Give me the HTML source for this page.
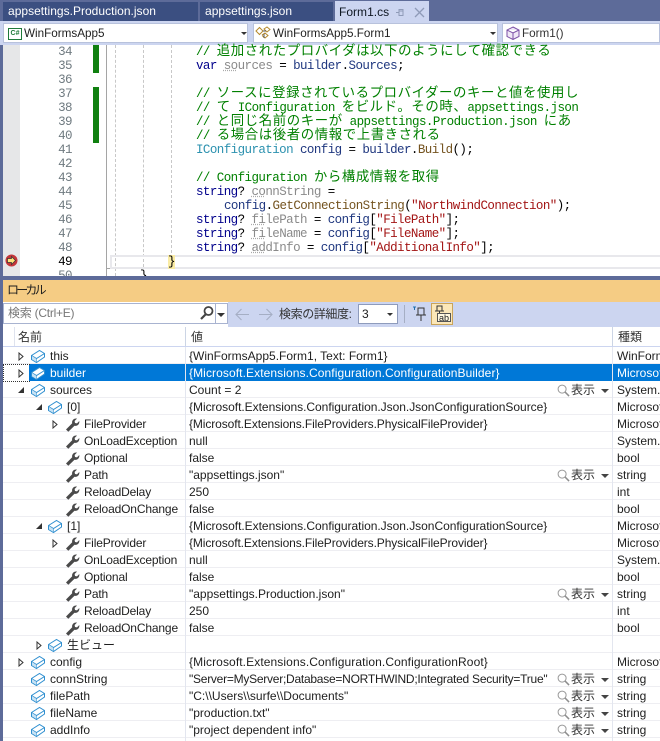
<!DOCTYPE html>
<html lang="ja"><head><meta charset="utf-8"><style>
html,body{margin:0;padding:0}
#p{position:relative;width:660px;height:741px;overflow:hidden;background:#5d6b99;font:12px "Liberation Sans","Noto Sans CJK JP",sans-serif;color:#1e1e1e}
#p div,#p svg{position:absolute}
.t{white-space:nowrap}
.c{left:0;white-space:pre;font:12.5px/14px "Liberation Mono","Noto Sans CJK JP",monospace;letter-spacing:-.57px;color:#000}
.c i{font:normal 13.4px/0 "Noto Sans CJK JP",sans-serif;letter-spacing:.6px}
.c u{text-decoration:underline dotted #aaa}
.g{color:#008000}.b{color:#00008b}.v{color:#8a8a8a}.k{color:#2b91af}.m{color:#74531f}.s{color:#a31515}.d{color:#1f377f}
.n{left:20px;width:52px;text-align:right;font:12.5px/14px "Liberation Mono",monospace;color:#6f7a80;letter-spacing:-.57px}
.r{left:3px;width:657px;height:17px;border-bottom:1px solid #eeeef2;box-sizing:border-box}
.r>*{margin-top:1px}
.r>.h,.r>.f{margin-top:0}
.l{white-space:nowrap;line-height:16px;height:16px;top:0}
.l[style*="left:81px"]{letter-spacing:-.15px}
.h{background:#0078d7;color:#fff}
.tab{font-size:12px;line-height:17px;letter-spacing:.02px}
.nav{font-size:11.7px;line-height:17px}
</style></head><body><div id="p">
<svg width="0" height="0" style="left:0;top:0"><defs>
<symbol id="o" viewBox="0 0 16 16"><path d="M1.500 7.500 9.500 2.500 14.500 5.500V9L6.500 14.500 1.500 11.500Z" fill="#fff" stroke="#2f8fd0" stroke-width="1"/><path d="M1.500 7.500 6.500 10.500 14.500 5.500M6.500 10.500V14.500" fill="none" stroke="#2f8fd0" stroke-width="1"/><path d="M2 8 6.500 11V14L2 11Z" fill="#c6e2f5"/></symbol>
<symbol id="w" viewBox="0 0 16 16"><path d="M2 13.500 8.200 7.300C7.500 4.600 9.800 2 13 2.600L10.600 5 11 7 13 7.400 15.300 5C15.800 8.200 13.200 10.500 10.500 9.700L4.300 15.700Z" fill="#4a4a4a"/></symbol>
<symbol id="q" viewBox="0 0 14 14"><circle cx="5.500" cy="5.500" r="4.300" fill="none" stroke="#999" stroke-width="1.100"/><path d="M8.700 8.700 13 13" stroke="#8d8d8d" stroke-width="1.600"/></symbol>
</defs></svg>

<!-- tabs -->
<div style="left:0;top:0;width:660px;height:21px;background:#5d6b99"></div>
<div style="left:3px;top:2px;width:195px;height:19px;background:#3b4f81"></div>
<div style="left:200px;top:2px;width:133px;height:19px;background:#3b4f81"></div>
<div class="t tab" style="left:8px;top:3px;color:#fff">appsettings.Production.json</div>
<div class="t tab" style="left:205px;top:3px;color:#fff">appsettings.json</div>
<div style="left:335px;top:1px;width:94px;height:20px;background:#ccd5f0"></div>
<div class="t tab" style="left:339px;top:4px;color:#0e1621">Form1.cs</div>
<svg style="left:395px;top:7px" width="11" height="11" viewBox="0 0 11 11"><path d="M1 5.500H4M4 2.500V8.500H8V2.500ZM4 4H8" fill="none" stroke="#8f9bb8"/></svg>
<svg style="left:414px;top:7px" width="11" height="11" viewBox="0 0 11 11"><path d="M1 1 10 10M10 1 1 10" stroke="#8f9bb8" stroke-width="1.300"/></svg>
<!-- nav bar -->
<div style="left:0;top:21px;width:660px;height:24px;background:#ccd5f0"></div>
<div style="left:3px;top:23px;width:245px;height:20px;background:#fff;border:1px solid #b8c2dc;box-sizing:border-box"></div>
<div style="left:253px;top:23px;width:245px;height:20px;background:#fff;border:1px solid #b8c2dc;box-sizing:border-box"></div>
<div style="left:502px;top:23px;width:158px;height:20px;background:#fff;border:1px solid #b8c2dc;box-sizing:border-box"></div>
<div class="t" style="left:8px;top:28px;width:12px;height:10px;border:1px solid #1f7a3a;font:bold 7px/10px 'Liberation Sans';color:#1f7a3a;text-align:center">C#</div>
<div class="t nav" style="left:24px;top:25px">WinFormsApp5</div>
<div style="left:241px;top:32px;border:3px solid transparent;border-top:3px solid #333"></div>
<svg style="left:255px;top:26px" width="16" height="15" viewBox="0 0 16 15"><path d="M1 5 4.500 1.500 8 5 4.500 8.500ZM9 3 12 1 15 3.500 12 6ZM7 9 10 7 13 9.500 10 12 7 9.500" fill="#fff" stroke="#b5892c"/><path d="M8 5H11M9 8V12" stroke="#555" fill="none"/></svg>
<div class="t nav" style="left:273px;top:25px">WinFormsApp5.Form1</div>
<div style="left:490px;top:32px;border:3px solid transparent;border-top:3px solid #333"></div>
<svg style="left:506px;top:26px" width="14" height="14" viewBox="0 0 14 14"><path d="M7 1 13 4V10.500L7 13.500 1 10.500V4ZM1 4 7 7 13 4M7 7V13.500" fill="#f0e8f6" stroke="#7b4fa6"/></svg>
<div class="t nav" style="left:522px;top:25px;color:#333">Form1()</div>

<!-- editor -->
<div style="left:3px;top:45px;width:657px;height:231px;background:#fff;overflow:hidden"></div>
<div style="left:3px;top:45px;width:17px;height:231px;background:#e6e7e8"></div>
<div style="left:93px;top:45px;width:6px;height:28px;background:#108010"></div>
<div style="left:93px;top:87px;width:6px;height:56px;background:#108010"></div>
<div style="left:106px;top:45px;width:1px;height:231px;background:#a5a5a5"></div>
<div style="left:107px;top:268px;width:4px;height:1px;background:#a5a5a5"></div>
<div style="left:115px;top:45px;width:0;height:231px;border-left:1px dashed #c8c8c8"></div>
<div style="left:143px;top:45px;width:0;height:222px;border-left:1px dashed #c8c8c8"></div>
<div style="left:171px;top:45px;width:0;height:208px;border-left:1px dashed #c8c8c8"></div>
<div style="left:110px;top:255px;width:550px;height:10px;border:2px solid #e8e8ec;border-right:0"></div>
<div style="left:168px;top:255px;width:7px;height:14px;background:#faeca5"></div>
<svg style="left:5px;top:254px" width="13" height="13" viewBox="0 0 13 13"><circle cx="6.500" cy="6.500" r="6" fill="#c4363a"/><path d="M2.500 4.500H6.500V2.500L10.500 6.500 6.500 10.500V8.500H2.500Z" fill="#ffe27a" stroke="#333" stroke-width=".7"/></svg>

<div class="n" style="top:45px">34</div><div class="n" style="top:59px">35</div><div class="n" style="top:73px">36</div><div class="n" style="top:87px">37</div><div class="n" style="top:101px">38</div><div class="n" style="top:115px">39</div><div class="n" style="top:129px">40</div><div class="n" style="top:143px">41</div><div class="n" style="top:157px">42</div><div class="n" style="top:171px">43</div><div class="n" style="top:185px">44</div><div class="n" style="top:199px">45</div><div class="n" style="top:213px">46</div><div class="n" style="top:227px">47</div><div class="n" style="top:241px">48</div><div class="n" style="top:255px;color:#000">49</div><div class="n" style="top:269px;height:7px;overflow:hidden">50</div>

<div class="c g" style="left:196px;top:45px">// <i>追加されたプロバイダは以下のようにして確認できる</i></div>
<div class="c" style="left:196px;top:59px"><span class="b">var</span> <span class="v"><u>so</u>urces</span> = <span class="d">builder</span>.<span class="d">Sources</span>;</div>
<div class="c g" style="left:196px;top:87px">// <i>ソースに登録されているプロバイダーのキーと値を使用し</i></div>
<div class="c g" style="left:196px;top:101px">// <i>て</i> IConfiguration <i>をビルド。その時、</i>appsettings.json</div>
<div class="c g" style="left:196px;top:115px">// <i>と同じ名前のキーが</i> appsettings.Production.json <i>にあ</i></div>
<div class="c g" style="left:196px;top:129px">// <i>る場合は後者の情報で上書きされる</i></div>
<div class="c" style="left:196px;top:143px"><span class="k">IConfiguration</span> <span class="d">config</span> = <span class="d">builder</span>.<span class="m">Build</span>();</div>
<div class="c g" style="left:196px;top:171px">// Configuration <i>から構成情報を取得</i></div>
<div class="c" style="left:196px;top:185px"><span class="b">string</span>? <span class="v"><u>co</u>nnString</span> =</div>
<div class="c" style="left:224px;top:199px"><span class="d">config</span>.<span class="m">GetConnectionString</span>(<span class="s">"NorthwindConnection"</span>);</div>
<div class="c" style="left:196px;top:213px"><span class="b">string</span>? <span class="v"><u>fi</u>lePath</span> = <span class="d">config</span>[<span class="s">"FilePath"</span>];</div>
<div class="c" style="left:196px;top:227px"><span class="b">string</span>? <span class="v"><u>fi</u>leName</span> = <span class="d">config</span>[<span class="s">"FileName"</span>];</div>
<div class="c" style="left:196px;top:241px"><span class="b">string</span>? <span class="v"><u>ad</u>dInfo</span> = <span class="d">config</span>[<span class="s">"AdditionalInfo"</span>];</div>
<div class="c" style="left:168px;top:255px">}</div>
<div style="left:140px;top:269px;height:7px;width:10px;overflow:hidden"><div class="c" style="left:0;top:0">}</div></div>

<!-- locals panel -->
<div style="left:3px;top:280px;width:657px;height:22px;background:#f5cc84"></div>
<div class="t" style="left:7px;top:282px;font-size:12px;line-height:17px;color:#1e1e1e;letter-spacing:-2.800px">ローカル</div>
<div style="left:3px;top:302px;width:657px;height:439px;background:#fff"></div>
<div style="left:228px;top:302px;width:432px;height:25px;background:#ccd5f0"></div>
<div style="left:3px;top:303px;width:225px;height:21px;border:1px solid #a8b3d0;box-sizing:border-box;background:#fff"></div>
<div class="t" style="left:8px;top:305px;color:#777;line-height:17px;letter-spacing:-.25px">検索 (Ctrl+E)</div>
<svg style="left:199px;top:305px" width="16" height="16" viewBox="0 0 16 16"><circle cx="9.500" cy="6" r="4" fill="none" stroke="#444" stroke-width="1.800"/><path d="M7 9 2 14" stroke="#444" stroke-width="2.200"/></svg>
<div style="left:215px;top:304px;width:1px;height:19px;background:#a8b3d0"></div>
<div style="left:217px;top:313px;border:4px solid transparent;border-top:4px solid #333"></div>
<svg style="left:234px;top:307px" width="17" height="15" viewBox="0 0 17 15"><path d="M15 7.500H2M7.500 2 2 7.500 7.500 13" fill="none" stroke="#a5aec4" stroke-width="1.100"/></svg>
<svg style="left:257px;top:307px" width="17" height="15" viewBox="0 0 17 15"><path d="M2 7.500H15M9.500 2 15 7.500 9.500 13" fill="none" stroke="#a5aec4" stroke-width="1.100"/></svg>
<div class="t" style="left:279px;top:306px;line-height:17px;color:#333;letter-spacing:-.4px">検索の詳細度:</div>
<div style="left:358px;top:304px;width:40px;height:20px;background:#fff;border:1px solid #8e9bbc;box-sizing:border-box"></div>
<div class="t" style="left:362px;top:306px;line-height:17px">3</div>
<div style="left:387px;top:313px;border:3px solid transparent;border-top:3px solid #333"></div>
<div style="left:404px;top:305px;width:1px;height:18px;background:#a5aec4"></div>
<svg style="left:411px;top:305px" width="17" height="18" viewBox="0 0 17 18"><path d="M2 2H5M3.500 2V5" stroke="#1f6fb0" fill="none"/><path d="M7 3H13V10H7ZM10 10V16M5 10H15" fill="none" stroke="#333"/></svg>
<div style="left:431px;top:303px;width:22px;height:22px;background:#fbe7b8;border:1px solid #c9a45a;box-sizing:border-box"></div>
<svg style="left:433px;top:304px" width="19" height="20" viewBox="0 0 19 20"><path d="M4 2H9V7H4ZM6.500 7V11M2 7H11" fill="none" stroke="#333"/><rect x="4.500" y="9.500" width="13" height="8" fill="#fff8e0" stroke="#555"/></svg>
<div class="t" style="left:439px;top:313px;font-size:9px;line-height:10px;color:#222">ab</div>

<!-- header -->
<div style="left:3px;top:327px;width:657px;height:19px;background:#fff;border-bottom:1px solid #ccd5f0"></div>
<div style="left:14px;top:327px;width:1px;height:19px;background:#dfe3ee"></div>
<div style="left:185px;top:327px;width:1px;height:19px;background:#ccd5e5"></div>
<div style="left:612px;top:327px;width:1px;height:19px;background:#ccd5e5"></div>
<div class="t" style="left:18px;top:329px;line-height:17px;color:#333">名前</div>
<div class="t" style="left:191px;top:329px;line-height:17px;color:#333">値</div>
<div class="t" style="left:618px;top:329px;line-height:17px;color:#333">種類</div>

<!-- rows -->
<div style="left:185px;top:347px;width:1px;height:394px;background:#e3e6ef;z-index:2"></div>
<div style="left:612px;top:347px;width:1px;height:394px;background:#e3e6ef;z-index:2"></div>

<div class="r" style="top:347px"><svg style="left:14px;top:4px" width="8" height="9" viewBox="0 0 8 9"><path d="M2 1 6 4.500 2 8Z" fill="#fff" stroke="#333"/></svg><svg style="left:27px;top:0" width="16" height="16"><use href="#o"/></svg><div class="l" style="left:47px">this</div><div class="l" style="left:186px">{WinFormsApp5.Form1, Text: Form1}</div><div class="l" style="left:614px">WinForms</div></div>

<div class="r" style="top:364px;border:0"><div style="left:26px;top:0;width:631px;height:17px" class="h"></div><div class="f" style="left:0;top:0;width:26px;height:16px;border:1px dotted #333;border-right:0"></div><svg style="left:14px;top:4px" width="8" height="9" viewBox="0 0 8 9"><path d="M2 1 6 4.500 2 8Z" fill="#fff" stroke="#333"/></svg><svg style="left:27px;top:0" width="16" height="16"><use href="#o"/></svg><div class="l" style="left:47px;color:#fff">builder</div><div class="l" style="left:186px;color:#fff;letter-spacing:.09px">{Microsoft.Extensions.Configuration.ConfigurationBuilder}</div><div class="l" style="left:614px;color:#fff">Microsoft</div></div>

<div class="r" style="top:381px"><svg style="left:14px;top:4px" width="8" height="8" viewBox="0 0 8 8"><path d="M7 1V7H1Z" fill="#333"/></svg><svg style="left:27px;top:0" width="16" height="16"><use href="#o"/></svg><div class="l" style="left:47px">sources</div><div class="l" style="left:186px">Count = 2</div><svg style="left:554px;top:2px" width="13" height="13"><use href="#q"/></svg><div class="l" style="left:568px;color:#333">表示</div><div style="left:598px;top:7px;border:4px solid transparent;border-top:4px solid #444"></div><div class="l" style="left:614px">System.C</div></div>

<div class="r" style="top:398px"><svg style="left:32px;top:4px" width="8" height="8" viewBox="0 0 8 8"><path d="M7 1V7H1Z" fill="#333"/></svg><svg style="left:44px;top:0" width="16" height="16"><use href="#o"/></svg><div class="l" style="left:64px">[0]</div><div class="l" style="left:186px;letter-spacing:-.03px">{Microsoft.Extensions.Configuration.Json.JsonConfigurationSource}</div><div class="l" style="left:614px">Microsoft</div></div>

<div class="r" style="top:415px"><svg style="left:48px;top:4px" width="8" height="9" viewBox="0 0 8 9"><path d="M2 1 6 4.500 2 8Z" fill="#fff" stroke="#333"/></svg><svg style="left:61px;top:0" width="16" height="16"><use href="#w"/></svg><div class="l" style="left:81px">FileProvider</div><div class="l" style="left:186px;letter-spacing:-.1px">{Microsoft.Extensions.FileProviders.PhysicalFileProvider}</div><div class="l" style="left:614px">Microsoft</div></div>

<div class="r" style="top:432px"><svg style="left:61px;top:0" width="16" height="16"><use href="#w"/></svg><div class="l" style="left:81px">OnLoadException</div><div class="l" style="left:186px">null</div><div class="l" style="left:614px">System.A</div></div>

<div class="r" style="top:449px"><svg style="left:61px;top:0" width="16" height="16"><use href="#w"/></svg><div class="l" style="left:81px">Optional</div><div class="l" style="left:186px">false</div><div class="l" style="left:614px">bool</div></div>

<div class="r" style="top:466px"><svg style="left:61px;top:0" width="16" height="16"><use href="#w"/></svg><div class="l" style="left:81px">Path</div><div class="l" style="left:186px">"appsettings.json"</div><svg style="left:554px;top:2px" width="13" height="13"><use href="#q"/></svg><div class="l" style="left:568px;color:#333">表示</div><div style="left:598px;top:7px;border:4px solid transparent;border-top:4px solid #444"></div><div class="l" style="left:614px">string</div></div>

<div class="r" style="top:483px"><svg style="left:61px;top:0" width="16" height="16"><use href="#w"/></svg><div class="l" style="left:81px">ReloadDelay</div><div class="l" style="left:186px">250</div><div class="l" style="left:614px">int</div></div>

<div class="r" style="top:500px"><svg style="left:61px;top:0" width="16" height="16"><use href="#w"/></svg><div class="l" style="left:81px">ReloadOnChange</div><div class="l" style="left:186px">false</div><div class="l" style="left:614px">bool</div></div>

<div class="r" style="top:517px"><svg style="left:32px;top:4px" width="8" height="8" viewBox="0 0 8 8"><path d="M7 1V7H1Z" fill="#333"/></svg><svg style="left:44px;top:0" width="16" height="16"><use href="#o"/></svg><div class="l" style="left:64px">[1]</div><div class="l" style="left:186px;letter-spacing:-.03px">{Microsoft.Extensions.Configuration.Json.JsonConfigurationSource}</div><div class="l" style="left:614px">Microsoft</div></div>

<div class="r" style="top:534px"><svg style="left:48px;top:4px" width="8" height="9" viewBox="0 0 8 9"><path d="M2 1 6 4.500 2 8Z" fill="#fff" stroke="#333"/></svg><svg style="left:61px;top:0" width="16" height="16"><use href="#w"/></svg><div class="l" style="left:81px">FileProvider</div><div class="l" style="left:186px;letter-spacing:-.1px">{Microsoft.Extensions.FileProviders.PhysicalFileProvider}</div><div class="l" style="left:614px">Microsoft</div></div>

<div class="r" style="top:551px"><svg style="left:61px;top:0" width="16" height="16"><use href="#w"/></svg><div class="l" style="left:81px">OnLoadException</div><div class="l" style="left:186px">null</div><div class="l" style="left:614px">System.A</div></div>

<div class="r" style="top:568px"><svg style="left:61px;top:0" width="16" height="16"><use href="#w"/></svg><div class="l" style="left:81px">Optional</div><div class="l" style="left:186px">false</div><div class="l" style="left:614px">bool</div></div>

<div class="r" style="top:585px"><svg style="left:61px;top:0" width="16" height="16"><use href="#w"/></svg><div class="l" style="left:81px">Path</div><div class="l" style="left:186px">"appsettings.Production.json"</div><svg style="left:554px;top:2px" width="13" height="13"><use href="#q"/></svg><div class="l" style="left:568px;color:#333">表示</div><div style="left:598px;top:7px;border:4px solid transparent;border-top:4px solid #444"></div><div class="l" style="left:614px">string</div></div>

<div class="r" style="top:602px"><svg style="left:61px;top:0" width="16" height="16"><use href="#w"/></svg><div class="l" style="left:81px">ReloadDelay</div><div class="l" style="left:186px">250</div><div class="l" style="left:614px">int</div></div>

<div class="r" style="top:619px"><svg style="left:61px;top:0" width="16" height="16"><use href="#w"/></svg><div class="l" style="left:81px">ReloadOnChange</div><div class="l" style="left:186px">false</div><div class="l" style="left:614px">bool</div></div>

<div class="r" style="top:636px"><svg style="left:32px;top:4px" width="8" height="9" viewBox="0 0 8 9"><path d="M2 1 6 4.500 2 8Z" fill="#fff" stroke="#333"/></svg><svg style="left:44px;top:0" width="16" height="16"><use href="#o"/></svg><div class="l" style="left:64px">生ビュー</div></div>

<div class="r" style="top:653px"><svg style="left:14px;top:4px" width="8" height="9" viewBox="0 0 8 9"><path d="M2 1 6 4.500 2 8Z" fill="#fff" stroke="#333"/></svg><svg style="left:27px;top:0" width="16" height="16"><use href="#o"/></svg><div class="l" style="left:47px">config</div><div class="l" style="left:186px;letter-spacing:.1px">{Microsoft.Extensions.Configuration.ConfigurationRoot}</div><div class="l" style="left:614px">Microsoft</div></div>

<div class="r" style="top:670px"><svg style="left:27px;top:0" width="16" height="16"><use href="#o"/></svg><div class="l" style="left:47px">connString</div><div class="l" style="left:186px;letter-spacing:-.25px">"Server=MyServer;Database=NORTHWIND;Integrated Security=True"</div><svg style="left:554px;top:2px" width="13" height="13"><use href="#q"/></svg><div class="l" style="left:568px;color:#333">表示</div><div style="left:598px;top:7px;border:4px solid transparent;border-top:4px solid #444"></div><div class="l" style="left:614px">string</div></div>

<div class="r" style="top:687px"><svg style="left:27px;top:0" width="16" height="16"><use href="#o"/></svg><div class="l" style="left:47px">filePath</div><div class="l" style="left:186px">"C:\\Users\\surfe\\Documents"</div><svg style="left:554px;top:2px" width="13" height="13"><use href="#q"/></svg><div class="l" style="left:568px;color:#333">表示</div><div style="left:598px;top:7px;border:4px solid transparent;border-top:4px solid #444"></div><div class="l" style="left:614px">string</div></div>

<div class="r" style="top:704px"><svg style="left:27px;top:0" width="16" height="16"><use href="#o"/></svg><div class="l" style="left:47px">fileName</div><div class="l" style="left:186px">"production.txt"</div><svg style="left:554px;top:2px" width="13" height="13"><use href="#q"/></svg><div class="l" style="left:568px;color:#333">表示</div><div style="left:598px;top:7px;border:4px solid transparent;border-top:4px solid #444"></div><div class="l" style="left:614px">string</div></div>

<div class="r" style="top:721px"><svg style="left:27px;top:0" width="16" height="16"><use href="#o"/></svg><div class="l" style="left:47px">addInfo</div><div class="l" style="left:186px">"project dependent info"</div><svg style="left:554px;top:2px" width="13" height="13"><use href="#q"/></svg><div class="l" style="left:568px;color:#333">表示</div><div style="left:598px;top:7px;border:4px solid transparent;border-top:4px solid #444"></div><div class="l" style="left:614px">string</div></div>

</div></body></html>
